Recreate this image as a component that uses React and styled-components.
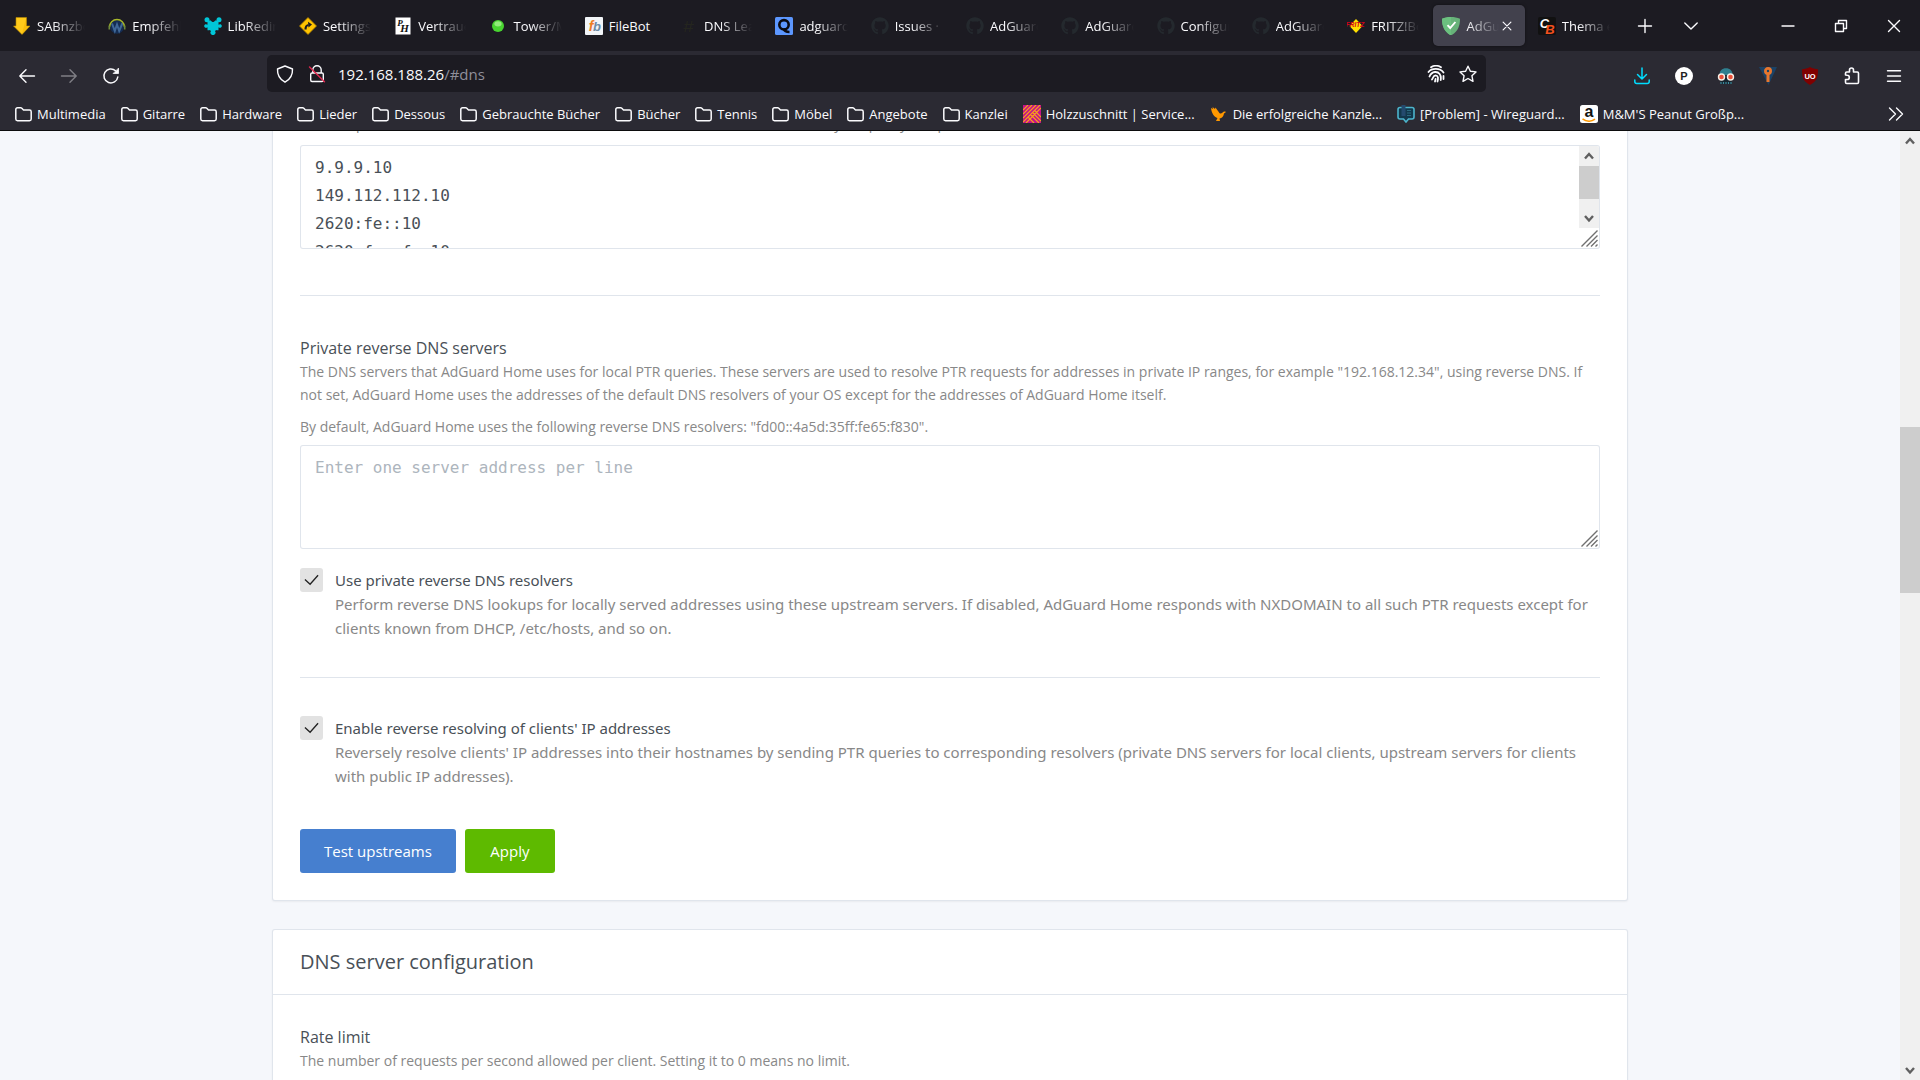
import React from 'react';
import styled, { createGlobalStyle, css } from 'styled-components';
import { FaGithub } from 'react-icons/fa';

const GlobalStyle = createGlobalStyle`
  *, *::before, *::after { box-sizing: border-box; }
  html, body { margin: 0; padding: 0; }
  body { background: #1c1b22; overflow: hidden; }
  button, input, textarea { font: inherit; margin: 0; }
`;

const UI_FONT = "'Open Sans', 'Noto Sans', sans-serif";
const LINE = 'rgba(0, 40, 100, 0.12)';

/* ---------- browser chrome ---------- */

const Window = styled.div`
  display: flex;
  flex-direction: column;
  height: 100vh;
  font-family: ${UI_FONT};
  color: #fbfbfe;
`;

const TabBar = styled.header`
  display: flex;
  height: 51px;
  background: #1c1b22;
`;

const Tabs = styled.div`
  display: flex;
  flex: 1;
  min-width: 0;
  padding-left: 2px;
`;

const TabBox = styled.div`
  display: flex;
  align-items: center;
  flex: 1 1 0;
  min-width: 0;
  max-width: 225px;
  margin: 5px 2px;
  padding: 0 10px 0 9px;
  border-radius: 5px;
  ${(p) =>
    p.$active &&
    css`
      background: #42414d;
      box-shadow: 0 0 3px rgba(0, 0, 0, 0.5);
    `}
`;

const TabLabel = styled.button`
  display: flex;
  align-items: center;
  gap: 6px;
  flex: 1;
  min-width: 0;
  padding: 0;
  border: 0;
  background: none;
  color: inherit;
  font-size: 13px;
  line-height: 20px;
  text-align: left;

  svg { flex: none; }
`;

const TabTitle = styled.span`
  flex: 1;
  min-width: 0;
  overflow: hidden;
  white-space: nowrap;
  mask-image: ${(p) => (p.$full ? 'none' : 'linear-gradient(to left, transparent, #000 32px)')};
`;

const IconButton = styled.button`
  display: flex;
  align-items: center;
  justify-content: center;
  flex: none;
  width: ${(p) => p.$w || 42}px;
  height: 100%;
  padding: 0;
  border: 0;
  background: none;
  color: #fbfbfe;
  opacity: ${(p) => (p.disabled ? 0.4 : 1)};
`;

const WindowButtons = styled.div`
  display: flex;
  margin-left: 47px;
`;

const NavBar = styled.nav`
  display: flex;
  height: 49px;
  padding: 0 5px 0 6px;
  background: #2b2a33;
`;

const Spring = styled.div`
  flex: 1 1 0;
`;

const UrlBar = styled.div`
  display: flex;
  align-items: center;
  flex: 9 1 0;
  min-width: 0;
  margin: 4px 0 8px;
  padding: 0 2px;
  border-radius: 5px;
  background: #1c1b22;
`;

const UrlField = styled.div`
  display: grid;
  flex: 1;
  min-width: 0;
  margin-left: 5px;
  font-size: 15px;
  line-height: 24px;
`;

const UrlInput = styled.input`
  grid-area: 1 / 1;
  width: 100%;
  padding: 0;
  border: 0;
  outline: 0;
  background: none;
  color: transparent;
`;

const UrlText = styled.span`
  grid-area: 1 / 1;
  pointer-events: none;
  white-space: nowrap;
`;

const UrlPath = styled.span`
  color: #8f8f9a;
`;

const Bookmarks = styled.nav`
  display: flex;
  align-items: center;
  gap: 15px;
  height: 31px;
  padding: 0 12px 2px 15px;
  border-bottom: 1px solid #0c0c0d;
  background: #2b2a33;
`;

const BookmarkLink = styled.a`
  display: flex;
  align-items: center;
  gap: 5px;
  flex: none;
  color: #fbfbfe;
  font-size: 13px;
  line-height: 20px;
  text-decoration: none;
  white-space: nowrap;
`;

const MoreButton = styled(IconButton)`
  margin-left: auto;
`;

/* ---------- page ---------- */

const Viewport = styled.div`
  display: flex;
  flex: 1;
  min-height: 0;
  background: #f5f7fb;
  color: #495057;
`;

const ScrollArea = styled.main`
  flex: 1;
  min-width: 0;
  overflow: hidden;
`;

const Container = styled.div`
  display: flex;
  flex-direction: column;
  gap: 28px;
  max-width: 1356px;
  margin: -47px auto 0;
`;

const Card = styled.section`
  border: 1px solid ${LINE};
  border-radius: 3px;
  background: #fff;
  box-shadow: 0 1px 2px rgba(0, 0, 0, 0.05);
`;

const CardHeader = styled.header`
  display: flex;
  align-items: center;
  height: 65px;
  padding: 0 27px;
  border-bottom: 1px solid ${LINE};
`;

const CardTitle = styled.h3`
  margin: 0;
  font-size: 20px;
  font-weight: 400;
  line-height: 28px;
`;

const CardBody = styled.div`
  padding: ${(p) => p.$top || 27}px 27px 27px;
`;

const FieldLabel = styled.label`
  display: block;
  font-size: 16px;
  line-height: 24px;
`;

const Hint = styled.p`
  margin: 0 0 ${(p) => p.$gap || 0}px;
  color: #888;
  font-size: 14px;
  line-height: 23px;
`;

const TextBox = styled.div`
  display: flex;
  height: 104px;
  overflow: hidden;
  border: 1px solid ${LINE};
  border-radius: 3px;
  background: #fff;
`;

const TextArea = styled.textarea`
  flex: 1;
  min-width: 0;
  padding: 8px 14px 0;
  border: 0;
  outline: 0;
  overflow: hidden;
  resize: none;
  background: none;
  color: #495057;
  font-family: 'DejaVu Sans Mono', 'Liberation Mono', monospace;
  font-size: 16px;
  line-height: 28px;

  &::placeholder { color: #adb5bd; opacity: 1; }
`;

const TextBoxEdge = styled.div`
  display: flex;
  flex-direction: column;
  justify-content: flex-end;
  width: 20px;

  > svg { flex: none; }
`;

const Divider = styled.hr`
  margin: ${(p) => p.$before}px 0 ${(p) => p.$after}px;
  border: 0;
  border-top: 1px solid ${LINE};
`;

const CheckField = styled.div`
  display: grid;
  grid-template-columns: 23px 1fr;
  column-gap: 12px;
  margin-top: ${(p) => p.$top || 0}px;
  font-family: 'Noto Sans', 'Open Sans', sans-serif;
  font-size: 15px;
  line-height: 24px;
`;

const CheckInput = styled.input`
  appearance: none;
  width: 23px;
  height: 24px;
  border-radius: 3px;
  background: #e2e2e2
    url("data:image/svg+xml,%3Csvg xmlns='http://www.w3.org/2000/svg' viewBox='0 0 16 12' fill='none' stroke='%23222' stroke-width='1.4'%3E%3Cpath d='M1 5.5 6.5 10.5 15 1'/%3E%3C/svg%3E")
    center / 15px 12px no-repeat;
`;

const CheckHint = styled.p`
  grid-column: 2;
  margin: 0;
  color: #888;
`;

const Actions = styled.div`
  display: flex;
  gap: 9px;
  margin-top: 41px;
`;

const ActionButton = styled.button`
  min-width: 90px;
  height: 44px;
  padding: 0 24px;
  border: 0;
  border-radius: 3px;
  background: ${(p) => (p.$tone === 'success' ? '#5eba00' : '#467fcf')};
  color: #fff;
  font-size: 15px;
  line-height: 24px;
`;

/* ---------- scrollbars ---------- */

const ScrollTrack = styled.div`
  display: flex;
  flex-direction: column;
  flex: ${(p) => (p.$fill ? '1' : 'none')};
  width: 20px;
  min-height: 0;
  background: #f0f0f0;
  color: #606060;

  > svg { flex: none; }
`;

const ScrollPart = styled.div`
  flex: ${(p) => p.$share} 1 0;
  background: ${(p) => (p.$thumb ? '#cdcdcd' : 'transparent')};
`;

const Arrow = ({ d }) => (
  <svg width="20" height="20" viewBox="0 0 20 20" fill="none" stroke="currentColor" strokeWidth="2.4">
    <path d={d} />
  </svg>
);

const ScrollBar = ({ before, size, after, fill }) => (
  <ScrollTrack $fill={fill} aria-hidden="true">
    <Arrow d="M6 12.5 10 8l4 4.5" />
    <ScrollPart $share={before} />
    <ScrollPart $share={size} $thumb />
    <ScrollPart $share={after} />
    <Arrow d="M6 8l4 4.5L14 8" />
  </ScrollTrack>
);

const Grip = () => (
  <svg width="20" height="20" viewBox="0 0 20 20" fill="none" stroke="#707070" strokeWidth="1.4">
    <path d="M2.5 18.5 18.5 2.5M7.5 18.5l11-11M12 18.5l6.5-6.5M16.5 18.5l2-2" />
  </svg>
);

/* ---------- icons ---------- */

const Icon = ({ size = 18, children, ...rest }) => (
  <svg width={size} height={size} viewBox="0 0 18 18" fill="none" {...rest}>
    {children}
  </svg>
);

const Line = ({ w = 1.4, children, ...rest }) => (
  <Icon stroke="currentColor" strokeWidth={w} strokeLinecap="round" strokeLinejoin="round" {...rest}>
    {children}
  </Icon>
);

const Glyph = ({ x = 9, y, size, fill, family = 'Liberation Sans', italic, children }) => (
  <text
    x={x}
    y={y}
    fontSize={size}
    fill={fill}
    fontFamily={`'${family}', sans-serif`}
    fontWeight="700"
    fontStyle={italic ? 'italic' : 'normal'}
    textAnchor="middle"
  >
    {children}
  </text>
);

const SabIcon = () => (
  <Icon>
    <path d="M3 .5h10.500V9H17L9 17.500.5 9H3z" fill="#ffca1a" stroke="#b98a00" strokeWidth=".6" />
    <path d="M9 17 16 9.300h-3V1z" fill="#f5b400" opacity=".6" />
  </Icon>
);
const HeadphoneIcon = () => (
  <Icon>
    <circle cx="9" cy="10" r="6.800" fill="#142c52" />
    <path d="M4 6.500 6.800 14l2.200-6.500L11.200 14l3.300-8" stroke="#3f6796" strokeWidth="2" />
    <path d="M1.500 10a7.500 7.500 0 0 1 15 0" stroke="#a8b82a" strokeWidth="1.400" />
    <path d="M1.300 8.500v4M16.700 8.500v4" stroke="#6f8a3a" strokeWidth="1.600" />
  </Icon>
);
const PuzzleFavicon = () => (
  <Icon>
    <path
      d="M3.500 3.500h3.300L9 5l2.200-1.500h3.300v4.300c1-.9 3.300-.8 3.300 1.200s-2.300 2.100-3.300 1.200v3h-3c.8 1.600 0 4.800-2.500 4.800s-3.300-3.200-2.500-4.800h-3v-3c-1 .9-3.300.8-3.300-1.200s2.300-2.100 3.300-1.200z"
      fill="#00c6d8"
    />
    <circle cx="3" cy="2.800" r="2.500" fill="#00c6d8" />
    <circle cx="15" cy="2.800" r="2.500" fill="#00c6d8" />
    <circle cx="9" cy="3.200" r="1.800" fill="#1c1b22" />
    <path d="M5 13.500v4l2-3.500M13 13.500v4l-2-3.500" fill="#1c1b22" />
  </Icon>
);
const DirectionIcon = () => (
  <Icon>
    <path d="M9 .5 17.500 9 9 17.500.5 9z" fill="#ffc400" stroke="#a87c00" strokeWidth=".8" />
    <path d="M6.500 12.500c0-3 .5-4 3-4.500" stroke="#1c1b22" strokeWidth="2.200" />
    <path d="M9 4.800 13 7.500 9.500 10.500z" fill="#1c1b22" />
  </Icon>
);
const PhIcon = () => (
  <Icon>
    <rect x="1.500" y=".5" width="15" height="17" fill="#fff" />
    <Glyph x={6} y={9} size={9} fill="#111" family="Liberation Serif" italic>P</Glyph>
    <Glyph x={10.500} y={15} size={11} fill="#111" family="Liberation Serif" italic>H</Glyph>
  </Icon>
);
const DotIcon = () => (
  <Icon>
    <circle cx="9" cy="9" r="6" fill="#48d430" />
    <ellipse cx="9" cy="6.800" rx="3.600" ry="2.600" fill="#b2f59a" opacity=".7" />
  </Icon>
);
const FbIcon = () => (
  <Icon>
    <rect width="18" height="18" rx="1" fill="#f2f5f8" />
    <Glyph x={6} y={14} size={14} fill="#f07d22" italic>f</Glyph>
    <Glyph x={12} y={14} size={13} fill="#6d8ba5" italic>b</Glyph>
  </Icon>
);
const HashIcon = () => (
  <Icon stroke="#24251f" strokeWidth="1.200">
    <path d="M7.500 4 5 15M12 4 9.500 15M4.500 7.500H14M3.500 11.500H13" />
  </Icon>
);
const QIcon = () => (
  <Icon>
    <rect width="18" height="18" rx="1.500" fill="#5c97ff" />
    <circle cx="9" cy="7.800" r="4.700" stroke="#0b0c14" strokeWidth="2.600" />
    <path d="M8.500 11.500c1 3 3 3.500 6 3.500" stroke="#0b0c14" strokeWidth="2.400" />
  </Icon>
);
const GhIcon = () => <FaGithub size={18} color="#24292e" />;
const FritzIcon = () => (
  <Icon>
    <path d="M9 2 15.500 9 9 16 2.500 9z" fill="#ffe000" />
    <Glyph y={10} size={6.500} fill="#d4001a" italic>FRITZ!</Glyph>
  </Icon>
);
const AdGuardIcon = () => (
  <Icon>
    <path d="M9 0c3 0 6.500.6 9 1.800C18 9 16 14.500 9 18.500 2 14.500 0 9 0 1.800 2.500.6 6 0 9 0z" fill="#67b279" />
    <path d="M9 0v18.500C2 14.500 0 9 0 1.800 2.500.6 6 0 9 0z" fill="#6bc07f" />
    <path d="M5.500 8.200 8.200 11l5.200-6" stroke="#fff" strokeWidth="1.900" />
  </Icon>
);
const CbIcon = () => (
  <Icon>
    <rect width="18" height="18" rx="2" fill="#111" />
    <Glyph x={6.500} y={11} size={13} fill="#fff" italic>C</Glyph>
    <Glyph x={12} y={17} size={13} fill="#f2501e" italic>B</Glyph>
  </Icon>
);

const FolderIcon = () => (
  <svg width="17" height="17" viewBox="0 0 17 17" fill="none" stroke="currentColor" strokeWidth="1.500" strokeLinejoin="round">
    <path d="M.8 13V3.500C.8 2.500 1.500 1.800 2.500 1.800h3.200c.4 0 .8.200 1.100.5L8.500 4h6c1 0 1.700.700 1.700 1.700V13c0 1-.7 1.700-1.700 1.700h-12C1.500 14.700.8 14 .8 13z" />
  </svg>
);
const StripesIcon = () => (
  <Icon>
    <rect width="18" height="18" fill="#c4128a" />
    <path d="M0 5 5 0M0 9 9 0M0 13 13 0M0 17 17 0M3 18 18 3M7.500 9.500l8.500 8.500M10 8l8 8M12 6l6 6M5 12l6 6" stroke="#f7a11b" strokeWidth="1.200" />
  </Icon>
);
const BirdIcon = () => (
  <Icon fill="#ff9800">
    <path d="M1 3l2 1-.5-2L5 4l.5-1.500L8 6c1 1 1 2 2 2.500C12 9 12.500 7 14 6.500c.8 0 1.500 0 2 .5l-2 1.500c-.5 3-2 4.500-4.500 5l.5 2.500H6l1.500-3C4 12 1.500 8 1 3z" />
  </Icon>
);
const BoardIcon = () => (
  <Icon>
    <path d="M3 2.500h12c1 0 2 1 2 2V12c0 1-1 2-2 2h-3.500L9 17l-2.500-3H3c-1 0-2-1-2-2V4.500c0-1 1-2 2-2z" fill="#12384c" stroke="#4db4cc" strokeWidth="1.600" />
    <path d="M4.500 0h4v11h-4z" fill="#244a6e" />
    <path d="M10 5.500h4M10 8h4M10 10.500h4" stroke="#2c6a80" />
  </Icon>
);
const AmazonIcon = () => (
  <Icon>
    <rect width="18" height="18" rx="2.500" fill="#fff" />
    <Glyph y={12} size={16} fill="#111">a</Glyph>
    <path d="M2.500 13.800c4 3 9 3 12.500.3" stroke="#f90" strokeWidth="1.600" />
  </Icon>
);

const BackIcon = () => <Line><path d="M16.500 9H2M8 2.800 1.800 9 8 15.200" /></Line>;
const ForwardIcon = () => <Line><path d="M1.500 9H16M10 2.800 16.200 9 10 15.200" /></Line>;
const ReloadIcon = () => (
  <Line w={1.500}>
    <path d="M15.800 10A7 7 0 1 1 13.600 3.800" />
    <path d="M16.500 1.500v5h-5z" fill="currentColor" strokeWidth=".8" />
  </Line>
);
const ShieldIcon = () => <Line><path d="M9 1 16.500 4C16.800 9.500 14 14.500 9 17.200 4 14.500 1.200 9.500 1.500 4z" /></Line>;
const InsecureIcon = () => (
  <Line>
    <path d="M4.800 8V5a4.200 4.200 0 0 1 8.400 0v3M4 8h10c.8 0 1.300.5 1.300 1.300V15c0 .8-.5 1.500-1.300 1.500H4c-.8 0-1.300-.7-1.300-1.500V9.300C2.700 8.500 3.200 8 4 8z" />
    <path d="M1.500 2 16.500 16.800" stroke="#e22850" />
  </Line>
);
const FingerprintIcon = () => (
  <Line w={1.800}>
    <path d="M4 2.200C7 .4 11 .4 14 2.200M1.500 7C4.500 3 13 2.600 16.500 7.500M2.500 11.500C3.500 9 5 7.300 8 7c4-.3 6.500 3 5.700 8M5 14.500c1.500-1.800 1-4 3.500-4.200 2.800 0 2.800 3.200 2 6.200M8 16.500l.6-2.500M16.500 11v3" />
  </Line>
);
const StarIcon = () => <Line><path d="M9 1.200l2.400 5 5.600.7-4.100 3.800 1.100 5.600L9 13.500l-5 2.800 1.100-5.600L1 6.900l5.600-.7z" /></Line>;
const DownloadIcon = () => (
  <Line color="#00ddff" w={1.500}>
    <path d="M9 1v10.500M4.500 7.500 9 12l4.500-4.500M1.800 13v1.500c0 1.200.8 2 2 2h10.400c1.200 0 2-.8 2-2V13" />
  </Line>
);
const PIcon = () => (
  <Icon>
    <circle cx="9" cy="9" r="9" fill="#fff" />
    <Glyph y={13} size={11} fill="#222">P</Glyph>
  </Icon>
);
const SpyIcon = () => (
  <Icon>
    <path d="M2.500 8C2.500 3.500 5 1.200 9 1.200S15.500 3.500 15.500 8z" fill="#2f7f8f" />
    <path d="M3.500 11h11v6h-11z" fill="#16242e" />
    <path d="M4 17v-2M6.500 17v-2M9 17v-2M11.500 17v-2M14 17v-2" stroke="#3d8a9c" strokeWidth="1.200" />
    <circle cx="4.500" cy="10" r="3" fill="#e8503a" stroke="#f6efe6" strokeWidth="1.400" />
    <circle cx="13.500" cy="10" r="3" fill="#e8503a" stroke="#f6efe6" strokeWidth="1.400" />
  </Icon>
);
const KeyIcon = () => (
  <Icon>
    <path d="M0 0h18L9.500 18z" fill="#1b4266" />
    <circle cx="9" cy="4" r="2.600" stroke="#e8762d" strokeWidth="2.800" />
    <path d="M9 6v9" stroke="#e8762d" strokeWidth="3" />
  </Icon>
);
const UblockIcon = () => (
  <Icon>
    <path d="M9 0c2.500 1.500 5 2 8 2.200 0 8-1 12-8 15.800C2 14.200 1 10.200 1 2.200 4 2 6.500 1.500 9 0z" fill="#800000" />
    <Glyph y={11.500} size={7.500} fill="#fff">UO</Glyph>
  </Icon>
);
const ExtensionsIcon = () => (
  <Line w={1.600}>
    <path d="M2.500 8V6.200c0-.8.500-1.200 1.200-1.200H6.500V3a2 2 0 0 1 4 0v2h3.800c.7 0 1.200.5 1.200 1.200v9c0 .8-.5 1.300-1.200 1.300H3.700c-.7 0-1.200-.5-1.200-1.300V12.500h1.700a2.100 2.100 0 0 0 0-4.200z" />
  </Line>
);
const MenuIcon = () => <Line><path d="M2.500 3.800h13M2.500 9h13M2.500 14.200h13" /></Line>;
const PlusIcon = () => <Line><path d="M9 2.500v13M2.500 9h13" /></Line>;
const ChevronIcon = () => <Line><path d="M2.800 6 9 12l6.200-6" /></Line>;
const MoreIcon = () => <Line><path d="M2.500 3 8.500 9l-6 6M9.500 3l6 6-6 6" /></Line>;
const CloseTabIcon = () => <Line size={14} w={1.500}><path d="M4 4l10 10M14 4 4 14" /></Line>;
const MinIcon = () => <Line><path d="M3 9h12" /></Line>;
const RestoreIcon = () => <Line><path d="M3.500 6.500h8v8h-8zM6.500 6.500v-3h8v8h-3" /></Line>;
const CloseIcon = () => <Line><path d="M3.500 3.500l11 11M14.500 3.500l-11 11" /></Line>;

/* ---------- data ---------- */

const TABS = [
  { icon: SabIcon, title: 'SABnzbd' },
  { icon: HeadphoneIcon, title: 'Empfehlung' },
  { icon: PuzzleFavicon, title: 'LibRedirect' },
  { icon: DirectionIcon, title: 'Settings' },
  { icon: PhIcon, title: 'Vertrauen' },
  { icon: DotIcon, title: 'Tower/Main' },
  { icon: FbIcon, title: 'FileBot', full: true },
  { icon: HashIcon, title: 'DNS Leak' },
  { icon: QIcon, title: 'adguard' },
  { icon: GhIcon, title: 'Issues · A' },
  { icon: GhIcon, title: 'AdGuard' },
  { icon: GhIcon, title: 'AdGuard' },
  { icon: GhIcon, title: 'Configuration' },
  { icon: GhIcon, title: 'AdGuard' },
  { icon: FritzIcon, title: 'FRITZ!Box' },
  { icon: AdGuardIcon, title: 'AdGuard', active: true },
  { icon: CbIcon, title: 'Thema er' },
];

const BOOKMARKS = [
  { title: 'Multimedia' },
  { title: 'Gitarre' },
  { title: 'Hardware' },
  { title: 'Lieder' },
  { title: 'Dessous' },
  { title: 'Gebrauchte Bücher' },
  { title: 'Bücher' },
  { title: 'Tennis' },
  { title: 'Möbel' },
  { title: 'Angebote' },
  { title: 'Kanzlei' },
  { title: 'Holzzuschnitt | Service...', icon: StripesIcon },
  { title: 'Die erfolgreiche Kanzle...', icon: BirdIcon },
  { title: '[Problem] - Wireguard...', icon: BoardIcon },
  { title: "M&M'S Peanut Großp...", icon: AmazonIcon },
];

const EXTENSIONS = [
  ['Downloads', DownloadIcon],
  ['Pocket', PIcon],
  ['Privacy', SpyIcon],
  ['Passwords', KeyIcon],
  ['uBlock', UblockIcon],
  ['Extensions', ExtensionsIcon],
  ['Menu', MenuIcon],
];

const BOOTSTRAP = '9.9.9.10\n149.112.112.10\n2620:fe::10\n2620:fe::fe:10';

const Tab = ({ icon: TabIcon, title, active, full }) => (
  <TabBox $active={active}>
    <TabLabel type="button">
      <TabIcon />
      <TabTitle $full={full}>{title}</TabTitle>
    </TabLabel>
    {active && (
      <IconButton $w={16} aria-label="Close tab">
        <CloseTabIcon />
      </IconButton>
    )}
  </TabBox>
);

const Check = ({ id, label, hint, top }) => (
  <CheckField $top={top}>
    <CheckInput id={id} type="checkbox" defaultChecked />
    <label htmlFor={id}>{label}</label>
    <CheckHint>{hint}</CheckHint>
  </CheckField>
);

export default function App() {
  return (
    <Window>
      <GlobalStyle />
      <TabBar>
        <Tabs>
          {TABS.map((tab, i) => (
            <Tab key={i} {...tab} />
          ))}
        </Tabs>
        <IconButton $w={46} aria-label="New tab"><PlusIcon /></IconButton>
        <IconButton $w={46} aria-label="List tabs"><ChevronIcon /></IconButton>
        <WindowButtons>
          <IconButton $w={53} aria-label="Minimize"><MinIcon /></IconButton>
          <IconButton $w={53} aria-label="Restore"><RestoreIcon /></IconButton>
          <IconButton $w={53} aria-label="Close"><CloseIcon /></IconButton>
        </WindowButtons>
      </TabBar>

      <NavBar>
        <IconButton aria-label="Back"><BackIcon /></IconButton>
        <IconButton aria-label="Forward" disabled><ForwardIcon /></IconButton>
        <IconButton aria-label="Reload"><ReloadIcon /></IconButton>
        <Spring />
        <UrlBar>
          <IconButton $w={32} aria-label="Tracking protection"><ShieldIcon /></IconButton>
          <IconButton $w={32} aria-label="Connection"><InsecureIcon /></IconButton>
          <UrlField>
            <UrlInput aria-label="Address" />
            <UrlText>
              192.168.188.26<UrlPath>/#dns</UrlPath>
            </UrlText>
          </UrlField>
          <IconButton $w={32} aria-label="Fingerprint"><FingerprintIcon /></IconButton>
          <IconButton $w={32} aria-label="Bookmark"><StarIcon /></IconButton>
        </UrlBar>
        <Spring />
        {EXTENSIONS.map(([name, ExtIcon]) => (
          <IconButton key={name} aria-label={name}><ExtIcon /></IconButton>
        ))}
      </NavBar>

      <Bookmarks>
        {BOOKMARKS.map(({ title, icon: MarkIcon = FolderIcon }) => (
          <BookmarkLink key={title} href="#">
            <MarkIcon />
            {title}
          </BookmarkLink>
        ))}
        <MoreButton $w={24} aria-label="More bookmarks"><MoreIcon /></MoreButton>
      </Bookmarks>

      <Viewport>
        <ScrollArea>
          <Container>
            <Card>
              <CardBody>
                <Hint $gap={10}>
                  Bootstrap DNS servers are used to resolve IP addresses of the DoH/DoT resolvers you specify as upstreams.
                </Hint>
                <TextBox>
                  <TextArea aria-label="Bootstrap DNS servers" defaultValue={BOOTSTRAP} />
                  <TextBoxEdge>
                    <ScrollBar fill before={0} size={33} after={9} />
                    <Grip />
                  </TextBoxEdge>
                </TextBox>
                <Divider $before={46} $after={40} />

                <FieldLabel htmlFor="private-dns">Private reverse DNS servers</FieldLabel>
                <Hint $gap={9}>
                  The DNS servers that AdGuard Home uses for local PTR queries. These servers are used to resolve PTR
                  requests for addresses in private IP ranges, for example "192.168.12.34", using reverse DNS. If not
                  set, AdGuard Home uses the addresses of the default DNS resolvers of your OS except for the addresses
                  of AdGuard Home itself.
                </Hint>
                <Hint $gap={7}>
                  By default, AdGuard Home uses the following reverse DNS resolvers: "fd00::4a5d:35ff:fe65:f830".
                </Hint>
                <TextBox>
                  <TextArea id="private-dns" placeholder="Enter one server address per line" />
                  <TextBoxEdge>
                    <Grip />
                  </TextBoxEdge>
                </TextBox>
                <Check
                  id="use-private"
                  top={19}
                  label="Use private reverse DNS resolvers"
                  hint="Perform reverse DNS lookups for locally served addresses using these upstream servers. If disabled, AdGuard Home responds with NXDOMAIN to all such PTR requests except for clients known from DHCP, /etc/hosts, and so on."
                />
                <Divider $before={37} $after={38} />
                <Check
                  id="resolve-clients"
                  label="Enable reverse resolving of clients' IP addresses"
                  hint="Reversely resolve clients' IP addresses into their hostnames by sending PTR queries to corresponding resolvers (private DNS servers for local clients, upstream servers for clients with public IP addresses)."
                />
                <Actions>
                  <ActionButton type="button">Test upstreams</ActionButton>
                  <ActionButton type="button" $tone="success">Apply</ActionButton>
                </Actions>
              </CardBody>
            </Card>

            <Card>
              <CardHeader>
                <CardTitle>DNS server configuration</CardTitle>
              </CardHeader>
              <CardBody $top={30}>
                <FieldLabel as="div">Rate limit</FieldLabel>
                <Hint>The number of requests per second allowed per client. Setting it to 0 means no limit.</Hint>
              </CardBody>
            </Card>
          </Container>
        </ScrollArea>
        <ScrollBar before={276} size={166} after={467} />
      </Viewport>
    </Window>
  );
}
